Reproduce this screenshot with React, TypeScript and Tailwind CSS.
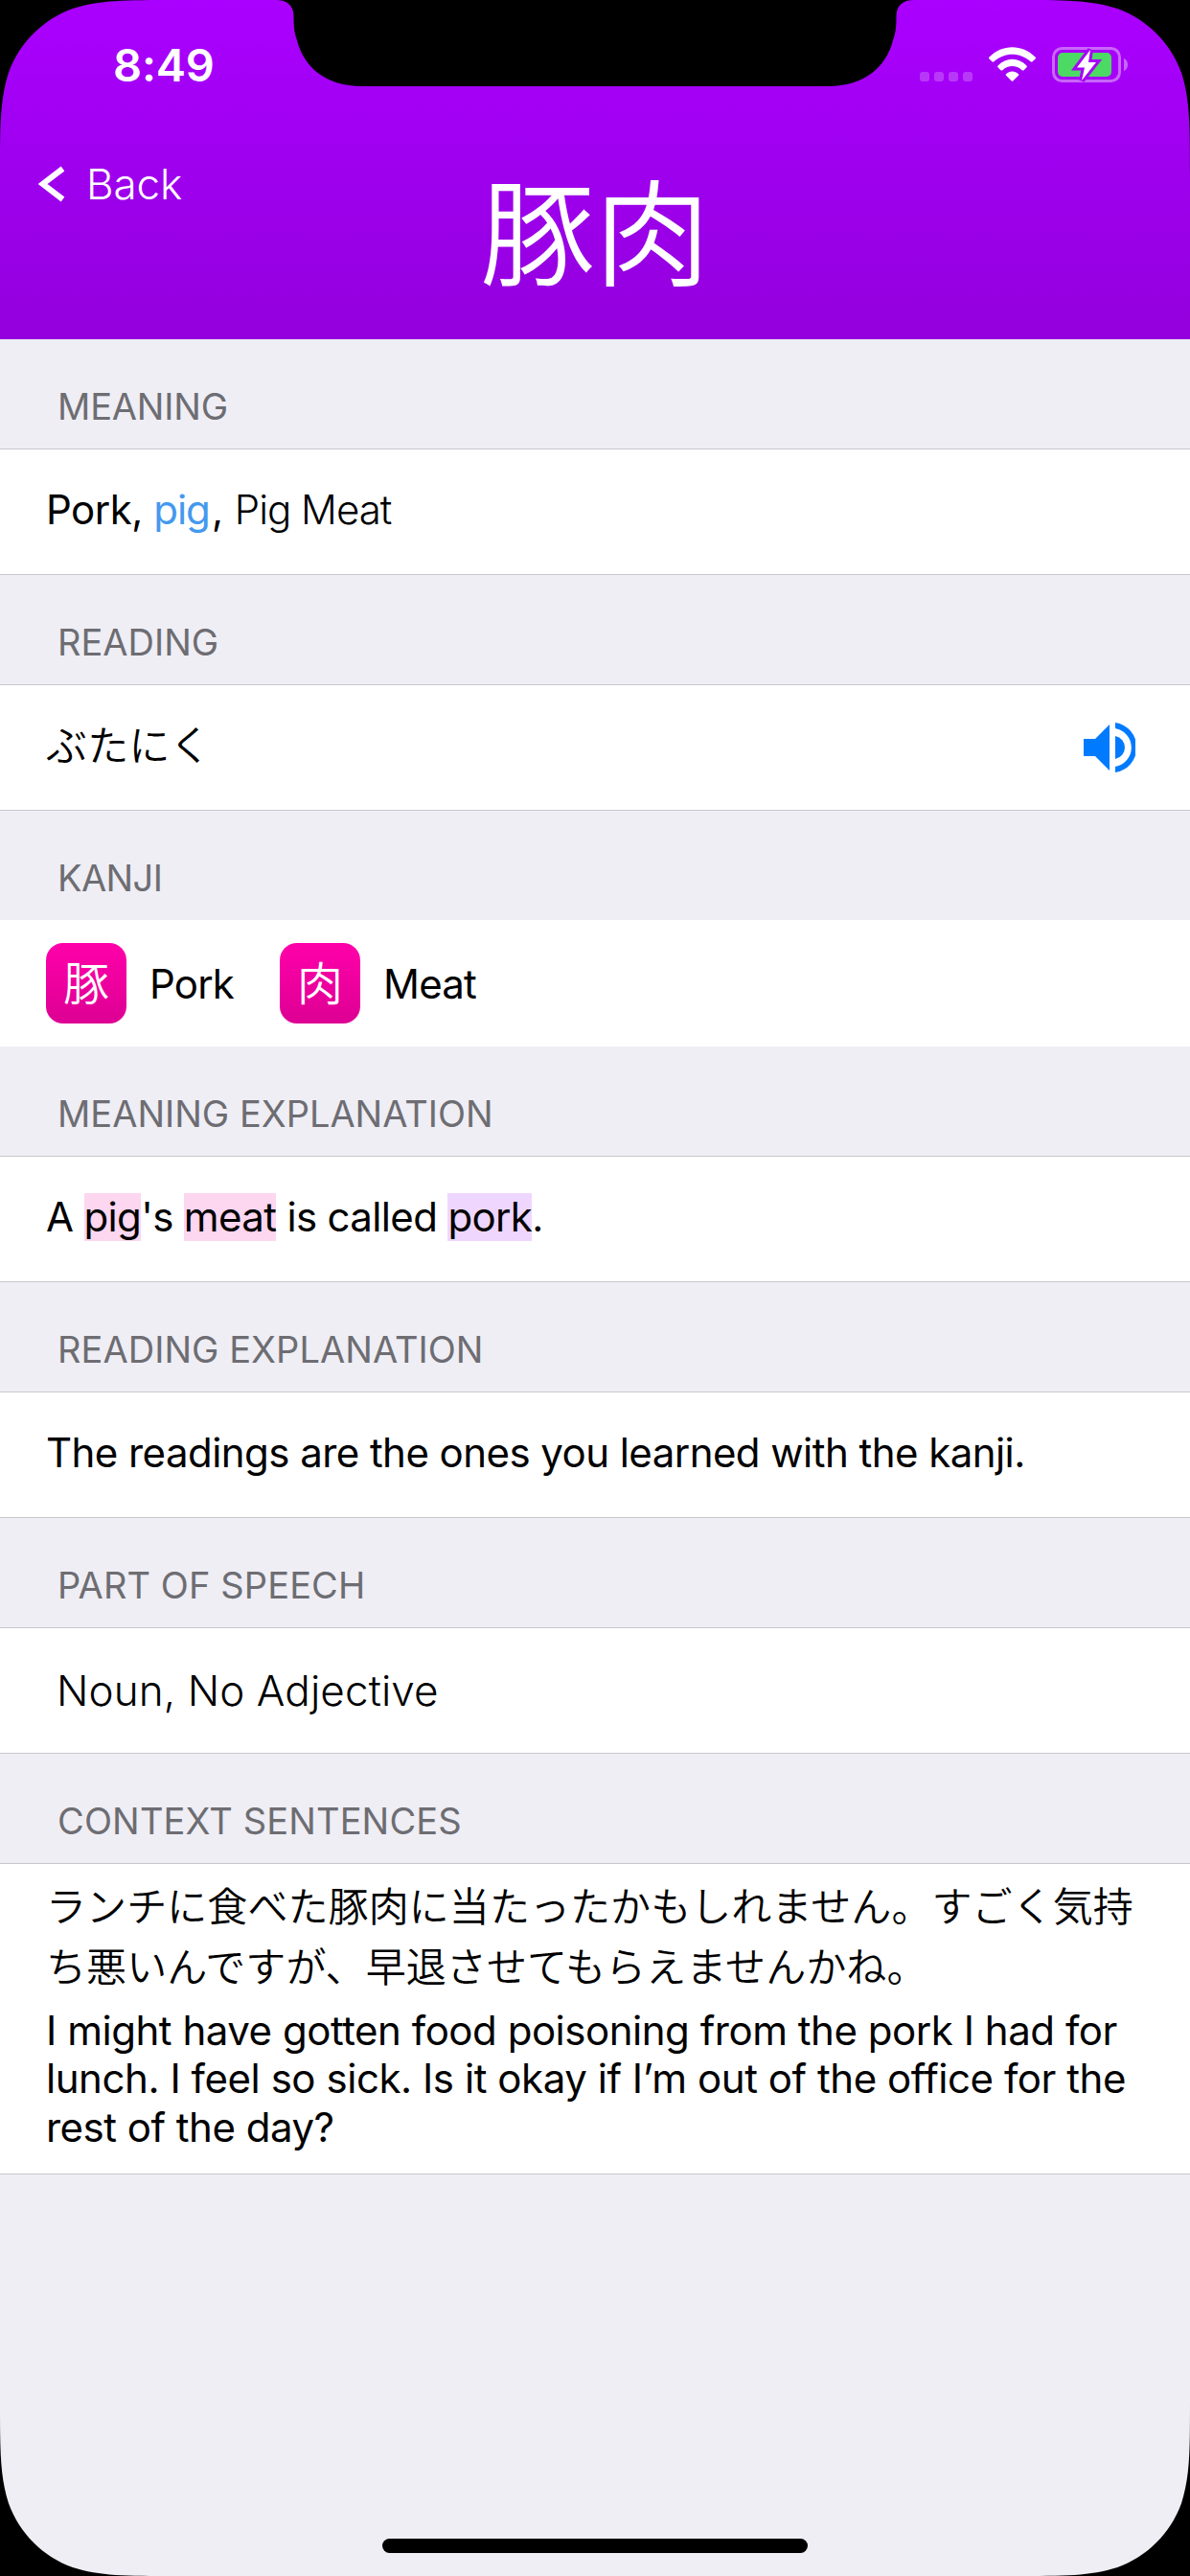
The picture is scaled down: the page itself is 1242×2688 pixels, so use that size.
import React from "react";

const rowBase = "flex h-[132px] items-center border-y border-[#c8c7cc] bg-white";

function Section({ title, spacing, children }: { title: string; spacing: string; children: React.ReactNode }) {
  return (
    <section>
      <h2 className="flex h-[114px] items-end pb-[19px] pl-[60px] text-[38px] leading-[50px] font-normal text-[#6d6d72]">
        <span className={spacing}>{title}</span>
      </h2>
      {children}
    </section>
  );
}

function StatusIcons() {
  return (
    <svg className="h-[40px] w-[220px]" viewBox="960 47 220 40" fill="none">
      {[960, 975, 990, 1005].map((x) => (
        <rect key={x} x={x} y="75" width="10" height="10" rx="3" fill="#fff" fillOpacity="0.22" />
      ))}
      <path d="M1032.500 59.500C1046 45.700 1067 45.700 1080.500 59.500Q1081.500 60.500 1080.500 61.500L1077.600 64.300Q1076.600 65 1075.600 64.300C1064.500 54.200 1048.500 54.200 1037.400 64.300Q1036.400 65 1035.400 64.300L1032.500 61.500Q1031.500 60.500 1032.500 59.500Z" fill="#fff" />
      <path d="M1041.500 68.500C1050 59.500 1063 59.500 1071.500 68.500Q1072.300 69.500 1071.500 70.300L1068.600 73.200Q1067.600 74 1066.600 73.200C1060.500 67.700 1052.500 67.700 1046.400 73.200Q1045.400 74 1044.400 73.200L1041.500 70.300Q1040.700 69.500 1041.500 68.500Z" fill="#fff" />
      <path d="M1050 77.300C1054 73.700 1059 73.700 1063 77.300Q1063.800 78 1063 78.800L1057.200 84.500Q1056.500 85 1055.800 84.500L1050 78.800Q1049.200 78 1050 77.300Z" fill="#fff" />
      <rect x="1099.500" y="50.500" width="69" height="34" rx="9" stroke="#fff" strokeOpacity="0.4" strokeWidth="3" />
      <rect x="1104" y="55" width="56" height="25" rx="5" fill="#4cd964" />
      <path d="M1173 61C1178.300 63 1178.300 72 1173 74Z" fill="#fff" fillOpacity="0.4" />
      <path d="M1138 52L1124 70.500H1132L1129 84L1144 65H1136Z" fill="#a600f8" stroke="#a600f8" strokeWidth="6" />
      <path d="M1138 52L1124 70.500H1132L1129 84L1144 65H1136Z" fill="#fff" />
    </svg>
  );
}

function KanjiItem({ char, label }: { char: string; label: string }) {
  return (
    <div className="flex w-[244px] items-center">
      <span className="flex size-[84px] justify-center rounded-[18px] bg-linear-to-b from-[#ff00aa] to-[#dd0093] pt-[15px] font-['Noto_Sans_CJK_JP',sans-serif] text-[48px] leading-[48px] font-[350] text-white">
        {char}
      </span>
      <span className="ml-[24px] text-[42px] tracking-[-0.8px]">{label}</span>
    </div>
  );
}

function DeviceFrame() {
  const corner =
    "M0 0H183.400C130.600 0 104.200 0 75.800 9C44.700 20.300 20.300 44.700 9 75.800C0 104.200 0 130.600 0 183.400Z";
  return (
    <svg className="pointer-events-none absolute inset-0 h-[2688px] w-[1242px]" viewBox="0 0 1242 2688">
      <path d={corner} />
      <path d={corner} transform="translate(1242 0) scale(-1 1)" />
      <path d={corner} transform="translate(0 2688) scale(1 -1)" />
      <path d={corner} transform="translate(1242 2688) scale(-1 -1)" />
      <path d="M288 0C300 0 306.500 6 306.500 17C306.500 27 307 34 310 42C317 70 340 90 378 90H864C902 90 925 70 932 42C935 34 935.500 27 935.500 17C935.500 6 942 0 954 0Z" />
    </svg>
  );
}

export default function App() {
  return (
    <div className="relative flex h-[2688px] w-[1242px] flex-col overflow-hidden bg-[#efeef5] font-['Inter','Noto_Sans_CJK_JP',sans-serif] whitespace-nowrap text-black">
      <header className="h-[354px] bg-linear-to-b from-[#aa00ff] to-[#9300dd] text-white">
        <div className="flex h-[136px] items-start justify-between pt-[39px] pr-[62px] pl-[118px]">
          <span className="text-[47px] leading-[58px] font-semibold tracking-[-0.2px]">8:49</span>
          <span className="pt-[8px]">
            <StatusIcons />
          </span>
        </div>
        <div className="grid grid-cols-3">
          <div className="flex h-[112px] items-center pl-[40px]">
            <svg className="h-[38px] w-[28px]" viewBox="0 0 28 38" fill="none" stroke="#fff" strokeWidth="6">
              <path d="M25.500 3L4.500 19L25.500 35" />
            </svg>
            <span className="ml-[22px] text-[44px] font-light tracking-[-0.1px]">Back</span>
          </div>
          <h1 className="pt-[41px] text-center font-['Noto_Sans_CJK_JP',sans-serif] text-[120px] leading-[120px] font-[350]">豚肉</h1>
        </div>
      </header>

      <main className="flex-1 text-[42px]">
        <Section title="MEANING" spacing="tracking-[-0.2px]">
          <p className={rowBase + " pb-[5px] pl-[48px] whitespace-pre"}>
            <span className="tracking-[-0.5px]">Pork, </span>
            <span className="mr-[2px] tracking-[-1px] text-[#4499ee]">pig</span>
            <span>, </span>
            <span className="font-light tracking-[-1px]">Pig Meat</span>
          </p>
        </Section>

        <Section title="READING" spacing="tracking-normal">
          <div className={rowBase + " justify-between pr-[57px] pl-[48px]"}>
            <span className="pb-[10px] font-['Noto_Sans_CJK_JP',sans-serif] text-[43px] font-[350] tracking-[0.3px]">ぶたにく</span>
            <svg className="h-[52px] w-[54px]" viewBox="0 0 54 52" fill="#007aff">
              <path d="M0 17H12L27 2V50L12 35H0Z" />
              <path d="M33 14A12.200 12.200 0 0 1 33 38Z" />
              <path d="M33 0A26.300 26.300 0 0 1 33 52V46A20.300 20.300 0 0 0 33 6Z" />
            </svg>
          </div>
        </Section>

        <Section title="KANJI" spacing="tracking-[-0.6px]">
          <div className="flex h-[132px] items-center bg-white pl-[48px]">
            <KanjiItem char="豚" label="Pork" />
            <KanjiItem char="肉" label="Meat" />
          </div>
        </Section>

        <Section title="MEANING EXPLANATION" spacing="tracking-normal">
          <p className={rowBase + " pb-[5px] pl-[48px] leading-[50px] tracking-[-0.65px] whitespace-pre"}>
            <span>A </span>
            <span className="bg-[#fdd6f0]">pig</span>
            <span>'s </span>
            <span className="bg-[#fdd6f0]">meat</span>
            <span> is called </span>
            <span className="bg-[#efd6ff]">pork</span>
            <span>.</span>
          </p>
        </Section>

        <Section title="READING EXPLANATION" spacing="tracking-[0.05px]">
          <p className={rowBase + " pb-[5px] pl-[48px]"}>
            <span className="tracking-[-0.55px]">The readings are the ones you learned with the kanji.</span>
          </p>
        </Section>

        <Section title="PART OF SPEECH" spacing="tracking-[0.1px]">
          <p className={rowBase + " pl-[59px]"}>
            <span className="text-[44px] font-light tracking-[0.1px]">Noun, No Adjective</span>
          </p>
        </Section>

        <Section title="CONTEXT SENTENCES" spacing="tracking-[0.15px]">
          <div className="h-[325px] border-y border-[#c8c7cc] bg-white pt-[10px] pl-[48px]">
            <p className="font-['Noto_Sans_CJK_JP',sans-serif] leading-[63px] font-[350] tracking-[0.08px]">
              ランチに食べた豚肉に当たったかもしれません。すごく気持
              <br />
              ち悪いんですが、早退させてもらえませんかね。
            </p>
            <p className="mt-[13px] leading-[50.4px]">
              <span className="tracking-[-0.47px]">I might have gotten food poisoning from the pork I had for</span>
              <br />
              <span className="tracking-[-0.45px]">lunch. I feel so sick. Is it okay if I’m out of the office for the</span>
              <br />
              <span className="tracking-[-0.5px]">rest of the day?</span>
            </p>
          </div>
        </Section>
      </main>

      <footer className="flex justify-center pb-[24px]">
        <div className="h-[15px] w-[444px] rounded-full bg-black" />
      </footer>
      <DeviceFrame />
    </div>
  );
}
